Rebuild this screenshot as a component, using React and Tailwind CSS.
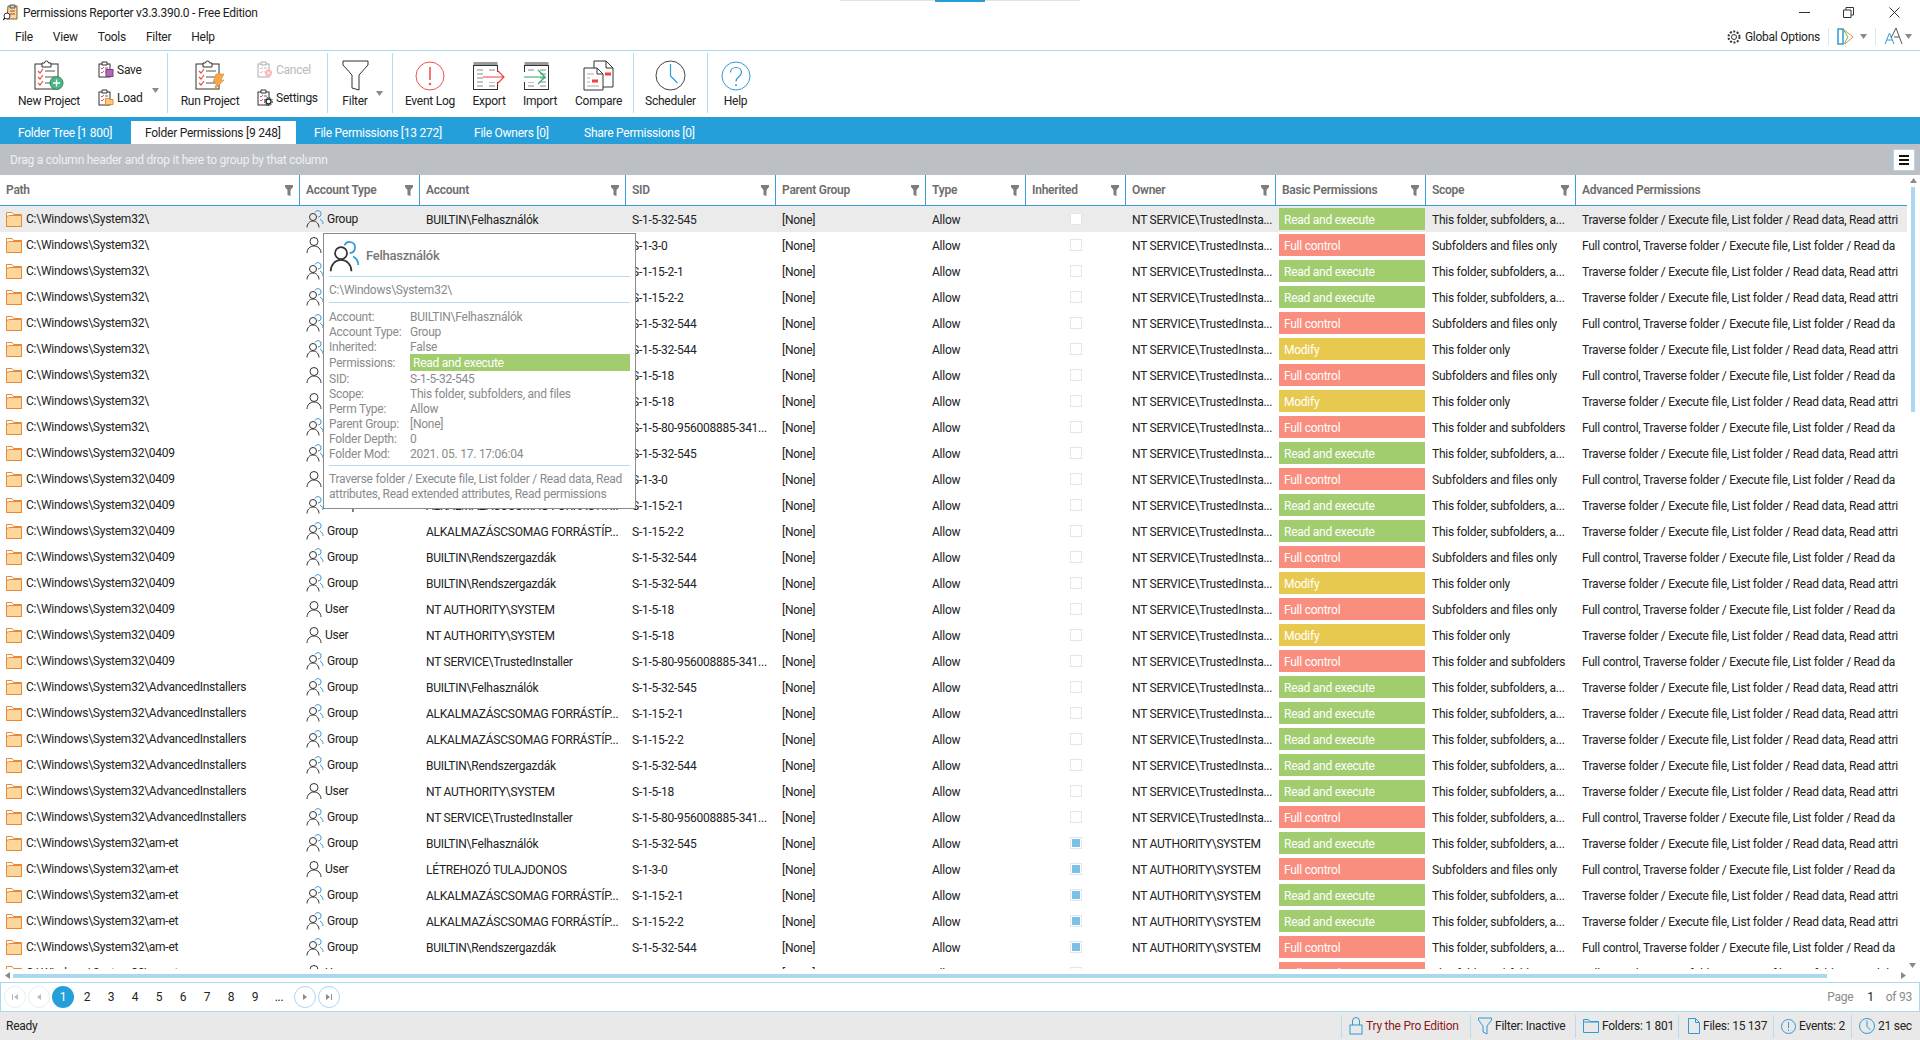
import React from 'react';

const RX = 'Read and execute';
const FC = 'Full control';
const MO = 'Modify';
const S_ALL = 'This folder, subfolders, a...';
const S_SUB = 'Subfolders and files only';
const S_ONLY = 'This folder only';
const S_FS = 'This folder and subfolders';
const A_T = 'Traverse folder / Execute file, List folder / Read data, Read attri';
const A_F = 'Full control, Traverse folder / Execute file, List folder / Read da';
const OW_T = 'NT SERVICE\\TrustedInsta...';
const OW_S = 'NT AUTHORITY\\SYSTEM';

const ACC = {
  felh: ['Group', 'BUILTIN\\Felhasználók', 'S-1-5-32-545'],
  creator: ['User', 'LÉTREHOZÓ TULAJDONOS', 'S-1-3-0'],
  alk1: ['Group', 'ALKALMAZÁSCSOMAG FORRÁSTÍP...', 'S-1-15-2-1'],
  alk2: ['Group', 'ALKALMAZÁSCSOMAG FORRÁSTÍP...', 'S-1-15-2-2'],
  rend: ['Group', 'BUILTIN\\Rendszergazdák', 'S-1-5-32-544'],
  sys: ['User', 'NT AUTHORITY\\SYSTEM', 'S-1-5-18'],
  ti: ['Group', 'NT SERVICE\\TrustedInstaller', 'S-1-5-80-956008885-341...'],
};

const P1 = 'C:\\Windows\\System32\\';
const P2 = 'C:\\Windows\\System32\\0409';
const P3 = 'C:\\Windows\\System32\\AdvancedInstallers';
const P4 = 'C:\\Windows\\System32\\am-et';

const rows = [
  [P1, 'felh', RX, S_ALL],
  [P1, 'creator', FC, S_SUB],
  [P1, 'alk1', RX, S_ALL],
  [P1, 'alk2', RX, S_ALL],
  [P1, 'rend', FC, S_SUB],
  [P1, 'rend', MO, S_ONLY],
  [P1, 'sys', FC, S_SUB],
  [P1, 'sys', MO, S_ONLY],
  [P1, 'ti', FC, S_FS],
  [P2, 'felh', RX, S_ALL],
  [P2, 'creator', FC, S_SUB],
  [P2, 'alk1', RX, S_ALL],
  [P2, 'alk2', RX, S_ALL],
  [P2, 'rend', FC, S_SUB],
  [P2, 'rend', MO, S_ONLY],
  [P2, 'sys', FC, S_SUB],
  [P2, 'sys', MO, S_ONLY],
  [P2, 'ti', FC, S_FS],
  [P3, 'felh', RX, S_ALL],
  [P3, 'alk1', RX, S_ALL],
  [P3, 'alk2', RX, S_ALL],
  [P3, 'rend', RX, S_ALL],
  [P3, 'sys', RX, S_ALL],
  [P3, 'ti', FC, S_ALL],
  [P4, 'felh', RX, S_ALL, true],
  [P4, 'creator', FC, S_SUB, true],
  [P4, 'alk1', RX, S_ALL, true],
  [P4, 'alk2', RX, S_ALL, true],
  [P4, 'rend', FC, S_ALL, true],
  [P4, 'sys', FC, S_ALL, true],
];

const columns = ['Path', 'Account Type', 'Account', 'SID', 'Parent Group', 'Type', 'Inherited', 'Owner', 'Basic Permissions', 'Scope', 'Advanced Permissions'];

const permClass = {
  [RX]: 'bg-[#a1cd6f]',
  [FC]: 'bg-[#f98e7e]',
  [MO]: 'bg-[#e8c94f]',
};

const tips = [
  ['Account:', 'BUILTIN\\Felhasználók'],
  ['Account Type:', 'Group'],
  ['Inherited:', 'False'],
  ['Permissions:', RX],
  ['SID:', 'S-1-5-32-545'],
  ['Scope:', 'This folder, subfolders, and files'],
  ['Perm Type:', 'Allow'],
  ['Parent Group:', '[None]'],
  ['Folder Depth:', '0'],
  ['Folder Mod:', '2021. 05. 17. 17:06:04'],
];

const Caret = ({ className = '' }) => (
  <svg width="7" height="5" viewBox="0 0 7 5" className={className}><path d="M0 0h7L3.5 5z" fill="#8a8a8a" /></svg>
);

const ClipLarge = ({ children }) => (
  <svg width="30" height="31" viewBox="0 0 30 31" fill="none">
    <rect x="1" y="4" width="23" height="25" fill="#fff" stroke="#333" />
    <path d="M8 7V3h2.5a2 2 0 0 1 4 0H17v4z" fill="#fff" stroke="#333" />
    {[11, 17, 23].map((y) => (
      <g key={y}>
        <path d={`M4 ${y}l2 2 3-4`} stroke="#ee4b4b" strokeWidth="1.2" />
        <path d={`M11 ${y}h10`} stroke="#555" />
      </g>
    ))}
    {children}
  </svg>
);

const ClipSmall = ({ children, muted }) => (
  <svg width="16" height="17" viewBox="0 0 16 17" fill="none" className={muted ? 'opacity-40' : ''}>
    <rect x="1" y="3" width="11" height="13" fill="#fff" stroke="#333" />
    <path d="M4 4V1h5v3z" fill="#fff" stroke="#333" />
    <path d="M3 7l1 1 2-2M3 11l1 1 2-2" stroke="#ee4b4b" />
    <path d="M7 7h3M7 11h3" stroke="#666" />
    {children}
  </svg>
);

const Sheet = ({ children }) => (
  <svg width="34" height="30" viewBox="0 0 34 30" fill="none">
    <rect x="1.5" y="1" width="24" height="4" fill="#9a9a9a" />
    <rect x="1.5" y="4.5" width="24" height="24" fill="#fff" stroke="#333" />
    {[9, 13, 17, 21, 25].map((y) => <path key={y} d={`M5 ${y}h6M17 ${y}h6`} stroke="#888" />)}
    {children}
  </svg>
);

const FolderIcon = () => (
  <svg width="16" height="15" viewBox="0 0 16 15" fill="none" className="shrink-0">
    <path d="M.5 14.500V.5h5.500l1.500 2h8v12z" fill="#fff" stroke="#e8873a" />
    <path d="M.5 14.500V4.500l3-1h12v11z" fill="#fcd79c" stroke="#e8873a" />
  </svg>
);

const UserIcon = ({ size = 16 }) => (
  <svg width={size} height={size + 2} viewBox="0 0 16 18" fill="none" className="shrink-0">
    <circle cx="8" cy="5.500" r="4" stroke="#333" />
    <path d="M1 17c0-4 3-7 7-7s7 3 7 7" stroke="#333" />
  </svg>
);

const GroupIcon = ({ size = 18 }) => (
  <svg width={size} height={size} viewBox="0 0 18 18" fill="none" className="shrink-0">
    <path d="M9 2.500a3.200 3.200 0 1 1 3 4.500M14 9c1.800 1 3 3 3 5" stroke="#2f9bd6" />
    <circle cx="7" cy="7" r="3.500" stroke="#333" />
    <path d="M1 17.500c0-3.500 2.500-6.500 6-6.500s6 3 6 6.500" stroke="#333" />
  </svg>
);

const HeaderFilter = () => (
  <svg width="8" height="11" viewBox="0 0 8 11" className="shrink-0"><path d="M0 0h8v2L5.500 5v6l-3-1V5L0 2z" fill="#7d7d7d" /></svg>
);

const LargeButton = ({ width, extra = '', label, children }) => (
  <div className={`flex flex-col items-center pt-[9px] ${width} ${extra}`}>
    <div className="h-[31px] flex items-center justify-center">{children}</div>
    <div className="mt-[2px] leading-[16px] whitespace-nowrap">{label}</div>
  </div>
);

const SmallButton = ({ icon, label, muted }) => (
  <div className={`flex items-center gap-[3px] h-[17px] ${muted ? 'text-[#b9b9b9]' : ''}`}>
    {icon}
    <span className="whitespace-nowrap">{label}</span>
  </div>
);

const Sep = () => <div className="w-px h-[60px] bg-[#b5dcf0] mt-[2px] shrink-0" />;

const Toolbar = () => (
  <div className="h-[66px] flex shrink-0 items-start text-[#222]">
    <LargeButton width="w-[98px]" label="New Project">
      <ClipLarge>
        <circle cx="22.500" cy="23" r="6.500" fill="#4fb584" stroke="#2f8a5e" />
        <path d="M22.500 19.500v7M19 23h7" stroke="#fff" strokeWidth="1.300" />
      </ClipLarge>
    </LargeButton>
    <div className="w-[69px] flex flex-col gap-[11px] pt-[10px] relative">
      <SmallButton label="Save" icon={
        <ClipSmall><rect x="8" y="8.500" width="7" height="7" fill="#b067b8" stroke="#7d3e8a" /></ClipSmall>
      } />
      <SmallButton label="Load" icon={
        <ClipSmall><path d="M7.500 15.500v-6h3l1 1h3.500v5z" fill="#fbc97a" stroke="#e8873a" /></ClipSmall>
      } />
      <Caret className="absolute left-[54px] top-[37px]" />
    </div>
    <Sep />
    <LargeButton width="w-[84px]" label="Run Project">
      <ClipLarge>
        <path d="M21 14h8l-3 6h3l-10 10 3-8h-4z" fill="#f5a84a" stroke="#e8873a" strokeWidth=".6" />
      </ClipLarge>
    </LargeButton>
    <div className="w-[75px] pl-[5px] flex flex-col gap-[11px] pt-[10px]">
      <SmallButton muted label="Cancel" icon={
        <ClipSmall muted><circle cx="11.500" cy="12" r="3.500" fill="#ee4b4b" /><path d="M10 10.500l3 3M13 10.500l-3 3" stroke="#fff" /></ClipSmall>
      } />
      <SmallButton label="Settings" icon={
        <ClipSmall><circle cx="11.500" cy="12.500" r="2.500" fill="#fff" stroke="#333" strokeWidth="1.500" /><circle cx="11.500" cy="12.500" r="4" stroke="#333" strokeDasharray="1.500 1.200" /></ClipSmall>
      } />
    </div>
    <Sep />
    <div className="w-[64px] relative">
      <LargeButton width="w-[54px]" label="Filter">
        <svg width="27" height="31" viewBox="0 0 27 31" fill="none">
          <path d="M1 1h25v4l-9 10v15l-7-2V15L1 5z" fill="#fff" stroke="#333" />
        </svg>
      </LargeButton>
      <Caret className="absolute left-[48px] top-[40px]" />
    </div>
    <Sep />
    <LargeButton width="w-[74px]" label="Event Log">
      <svg width="30" height="30" viewBox="0 0 30 30" fill="none">
        <circle cx="15" cy="15" r="14" stroke="#ef5350" />
        <path d="M15 6v13" stroke="#ef5350" strokeWidth="1.600" />
        <circle cx="15" cy="23" r="1.200" fill="#ef5350" />
      </svg>
    </LargeButton>
    <LargeButton width="w-[44px]" label="Export">
      <Sheet>
        <rect x="11" y="11" width="15" height="10" fill="#fff" />
        <path d="M11 16h21M25 9l7 7-7 7" stroke="#ef4040" strokeWidth="1.200" fill="none" />
      </Sheet>
    </LargeButton>
    <LargeButton width="w-[58px]" label="Import">
      <Sheet>
        <rect x="1" y="11" width="15" height="10" fill="#fff" />
        <path d="M1 16h21M15 9l7 7-7 7" stroke="#27ae60" strokeWidth="1.200" fill="none" />
      </Sheet>
    </LargeButton>
    <LargeButton width="w-[59px]" extra="mr-[5px]" label="Compare">
      <svg width="31" height="31" viewBox="0 0 31 31" fill="none">
        <path d="M11 1h12l7 7v19H11z" fill="#fff" stroke="#333" />
        <path d="M23 1v7h7" stroke="#333" />
        <path d="M22 14h6" stroke="#ef4040" strokeWidth="3" />
        <path d="M1 8h13l6 6v16H1z" fill="#fff" stroke="#333" />
        <path d="M14 8v6h6" stroke="#333" />
        <path d="M4 14h7M4 18h3M4 22h3M4 26h12" stroke="#aaa" />
        <path d="M9 21h6" stroke="#ef4040" strokeWidth="3" />
      </svg>
    </LargeButton>
    <Sep />
    <LargeButton width="w-[73px]" label="Scheduler">
      <svg width="31" height="31" viewBox="0 0 31 31" fill="none">
        <circle cx="15.500" cy="15.500" r="14.500" stroke="#444" />
        <path d="M15.500 4v12l7 7" stroke="#2f9bd6" strokeWidth="1.200" />
      </svg>
    </LargeButton>
    <Sep />
    <LargeButton width="w-[55px]" label="Help">
      <svg width="30" height="30" viewBox="0 0 30 30" fill="none">
        <circle cx="15" cy="15" r="14" stroke="#2f9bd6" />
        <path d="M9.500 11.500c0-3 2.500-5 5.500-5s5.500 2 5.500 5c0 4-5.500 4-5.500 9" stroke="#2f9bd6" strokeWidth="1.200" />
        <circle cx="15" cy="24" r="1" fill="#2f9bd6" />
      </svg>
    </LargeButton>
  </div>
);

const Row = ({ row, index }) => {
  const [path, key, perm, scope, inherited] = row;
  const [type, account, sid] = ACC[key];
  return (
    <div className={`grid grid-cols-[300px_120px_206px_150px_150px_100px_100px_150px_150px_150px_324px] h-[26px] items-center text-[#222] ${index === 0 ? 'bg-[#ebebeb]' : ''}`}>
      <div className="flex items-center gap-[4px] pl-[6px] whitespace-nowrap">
        <FolderIcon />
        <span>{path}</span>
      </div>
      <div className="flex items-center gap-[3px] pl-[6px]">
        {type === 'User' ? <UserIcon /> : <GroupIcon />}
        <span>{type}</span>
      </div>
      <div className="pl-[6px] pt-[2px] whitespace-nowrap">{account}</div>
      <div className="pl-[6px] pt-[2px] whitespace-nowrap">{sid}</div>
      <div className="pl-[6px] pt-[2px]">[None]</div>
      <div className="pl-[6px] pt-[2px]">Allow</div>
      <div className="flex justify-center">
        <div className="w-[12px] h-[12px] border border-[#e3e6e8] bg-white flex items-center justify-center">
          {inherited && <div className="w-[8px] h-[8px] bg-[#7cc0e6]" />}
        </div>
      </div>
      <div className="pl-[6px] pt-[2px] whitespace-nowrap">{inherited ? OW_S : OW_T}</div>
      <div className={`h-[22px] ml-[3px] mr-px pl-[5px] pt-[1px] flex items-center text-white ${permClass[perm]}`}>{perm}</div>
      <div className="pl-[6px] pt-[2px] whitespace-nowrap">{scope}</div>
      <div className="pl-[6px] pt-[2px] whitespace-nowrap overflow-hidden">{perm === FC ? A_F : A_T}</div>
    </div>
  );
};

const Tooltip = () => (
  <div className="absolute left-[323px] top-[27px] w-[313px] h-[276px] bg-white border border-[#8d8d8d] text-[#8a8a8a] px-[5px]">
    <div className="h-[43px] flex items-center gap-[6px] border-b border-[#b5dcf0] pt-[2px]">
      <GroupIcon size={31} />
      <span className="text-[13px] text-[#777] font-medium">Felhasználók</span>
    </div>
    <div className="h-[26px] flex items-center border-b border-[#b5dcf0]">{P1}</div>
    <div className="pt-[6px] h-[163px] border-b border-[#b5dcf0]">
      {tips.map(([k, v]) => (
        k === 'Permissions:' ? (
          <div key={k} className="flex h-[17px] items-center">
            <span className="w-[81px]">{k}</span>
            <span className="flex-1 h-[17px] flex items-center pl-[3px] bg-[#a1cd6f] text-white">{v}</span>
          </div>
        ) : (
          <div key={k} className="flex h-[15px] items-center">
            <span className="w-[81px]">{k}</span>
            <span>{v}</span>
          </div>
        )
      ))}
    </div>
    <div className="pt-[6px] leading-[15px]">Traverse folder / Execute file, List folder / Read data, Read attributes, Read extended attributes, Read permissions</div>
  </div>
);

const Circle = ({ children, strong, className = '' }) => (
  <div className={`w-[22px] h-[22px] rounded-full border flex items-center justify-center bg-white ${strong ? 'border-[#a9d8ef]' : 'border-[#e4eef4]'} ${className}`}>
    {children}
  </div>
);

const Nav = ({ d, fill }) => (
  <svg width="8" height="8" viewBox="0 0 8 8"><path d={d} fill={fill} /></svg>
);

const StatusItem = ({ icon, children, className = '', width }) => (
  <div className={`flex items-center gap-[3px] border-l border-[#b5dcf0] h-[23px] pl-[7px] ${width} ${className}`}>
    {icon}
    <span className="whitespace-nowrap">{children}</span>
  </div>
);

export default function App() {
  return (
    <div className="relative w-screen h-screen overflow-hidden bg-white flex flex-col text-[12px] leading-[16px] text-[#222] font-['Roboto',sans-serif] tracking-[-0.25px]">
      {/* Title bar */}
      <div className="h-[25px] flex items-center shrink-0 relative">
        <svg width="16" height="17" viewBox="0 0 16 17" fill="none" className="ml-[3px] mr-[4px]">
          <path d="M5 2h9v13H4z" fill="#f4d9a0" stroke="#8a5a2a" />
          <path d="M7 1h5v3H7z" fill="#ccc" stroke="#555" />
          <path d="M7 7h5M7 10h5" stroke="#c0392b" />
          <circle cx="4" cy="12" r="3" fill="#fff" stroke="#333" />
          <path d="M2 14l-2 2" stroke="#333" strokeWidth="1.500" />
        </svg>
        <span>Permissions Reporter v3.3.390.0 - Free Edition</span>
        <div className="absolute top-0 left-[840px] w-[240px] h-px bg-[#e2e2e2]" />
        <div className="absolute top-0 left-[935px] w-[50px] h-[2px] bg-[#259fda]" />
        <div className="ml-auto flex items-center">
          <svg width="11" height="11" viewBox="0 0 11 11" className="mr-[33px]"><path d="M0 5.500h11" stroke="#333" /></svg>
          <svg width="11" height="11" viewBox="0 0 11 11" fill="none" className="mr-[35px]"><path d="M.5 3h7.500v7.500H.5zM3 3V.5h7.500V8H8" stroke="#333" /></svg>
          <svg width="11" height="11" viewBox="0 0 11 11" className="mr-[20px]"><path d="M.5.500l10 10M10.500.500l-10 10" stroke="#333" /></svg>
        </div>
      </div>

      {/* Menu */}
      <div className="h-[26px] flex items-center border-b border-[#a9d8ef] shrink-0 pb-[2px]">
        <div className="flex gap-[20px] pl-[15px]">
          <span>File</span><span>View</span><span>Tools</span><span>Filter</span><span>Help</span>
        </div>
        <div className="ml-auto flex items-center pr-[8px]">
          <svg width="16" height="16" viewBox="0 0 16 16" fill="none" className="mr-[3px]">
            <circle cx="8" cy="8" r="2.500" stroke="#333" />
            <circle cx="8" cy="8" r="5.500" stroke="#333" strokeWidth="2" strokeDasharray="2 1.500" />
          </svg>
          <span>Global Options</span>
          <div className="w-px h-[17px] bg-[#d5e7f0] mx-[8px]" />
          <svg width="19" height="19" viewBox="0 0 19 19" fill="none">
            <path d="M1 2h5v15H1z" stroke="#2f9bd6" strokeWidth="1.500" />
            <path d="M6 2l10 8-8 7" stroke="#e8873a" />
            <path d="M6 2l5 8-4 7" stroke="#5fb84f" />
          </svg>
          <Caret className="ml-[4px]" />
          <div className="w-px h-[17px] bg-[#d5e7f0] mx-[8px]" />
          <svg width="19" height="19" viewBox="0 0 19 19" fill="none">
            <path d="M1 17L5.500 6 10 17M3 13h5" stroke="#2f9bd6" />
            <path d="M7 11l5-10 6 16M10 10h5" stroke="#555" />
          </svg>
          <Caret className="ml-[2px]" />
        </div>
      </div>

      <Toolbar />

      {/* Tabs */}
      <div className="h-[27px] bg-[#259fda] flex items-end shrink-0 text-white">
        <div className="w-[131px] h-[23px] pl-[18px] flex items-center">Folder Tree [1 800]</div>
        <div className="w-[165px] h-[23px] pl-[14px] flex items-center bg-white text-[#222]">Folder Permissions [9 248]</div>
        <div className="w-[160px] h-[23px] pl-[18px] flex items-center">File Permissions [13 272]</div>
        <div className="w-[110px] h-[23px] pl-[18px] flex items-center">File Owners [0]</div>
        <div className="h-[23px] pl-[18px] flex items-center">Share Permissions [0]</div>
      </div>

      {/* Group panel */}
      <div className="h-[31px] bg-[#bcc0c4] flex items-center pl-[10px] pr-[5px] shrink-0 text-[#eef0f1]">
        <span>Drag a column header and drop it here to group by that column</span>
        <div className="ml-auto w-[22px] h-[22px] bg-white border border-[#a9d8ef] flex flex-col items-center justify-center gap-[2px]">
          <div className="w-[10px] h-[2px] bg-[#111]" />
          <div className="w-[10px] h-[2px] bg-[#111]" />
          <div className="w-[10px] h-[2px] bg-[#111]" />
        </div>
      </div>

      {/* Column headers */}
      <div className="h-[31px] shrink-0">
        <div className="grid grid-cols-[300px_120px_206px_150px_150px_100px_100px_150px_150px_150px_324px] h-[30px] w-[1907px] font-semibold text-[#6d6d6d]">
          {columns.map((c, i) => (
            <div key={c} className={`flex items-center justify-between px-[6px] ${i < columns.length - 1 ? 'border-r border-[#3a9fd6]' : ''}`}>
              <span className="whitespace-nowrap">{c}</span>
              {i < columns.length - 1 && <HeaderFilter />}
            </div>
          ))}
        </div>
        <div className="h-px w-[1907px] bg-[#3a9fd6]" />
      </div>

      {/* Rows */}
      <div className="flex-1 relative overflow-hidden min-h-0">
        <div className="w-[1907px] overflow-hidden">
          {rows.map((r, i) => <Row key={i} row={r} index={i} />)}
        </div>
        <Tooltip />
        <Caret className="absolute left-[1909px] bottom-[1px]" />
      </div>

      {/* Vertical scrollbar */}
      <Caret className="absolute left-[1910px] top-[178px] rotate-180" />
      <div className="absolute left-[1911px] top-[187px] w-[4px] h-[225px] bg-[#a9d8ef]" />

      {/* Horizontal scrollbar */}
      <div className="h-[13px] flex items-center shrink-0 pl-[5px] pr-[14px] gap-[3px]">
        <svg width="5" height="7" viewBox="0 0 5 7"><path d="M5 0v7L0 3.500z" fill="#8a8a8a" /></svg>
        <div className="w-[1814px] h-[4px] bg-[#a9d8ef]" />
        <svg width="5" height="7" viewBox="0 0 5 7" className="ml-auto"><path d="M0 0v7l5-3.500z" fill="#8a8a8a" /></svg>
      </div>

      {/* Pager */}
      <div className="h-[30px] border border-[#a9d8ef] flex items-center pl-[3px] gap-[2px] shrink-0">
        <Circle><Nav d="M1 1h1v6H1zM7 1v6L3 4z" fill="#bbb" /></Circle>
        <Circle><Nav d="M6 1v6L2 4z" fill="#bbb" /></Circle>
        <div className="w-[22px] h-[22px] rounded-full bg-[#259fda] text-white flex items-center justify-center">1</div>
        {['2', '3', '4', '5', '6', '7', '8', '9', '...'].map((n) => (
          <div key={n} className="w-[22px] h-[22px] flex items-center justify-center">{n}</div>
        ))}
        <Circle strong className="ml-[2px]"><Nav d="M2 1v6l4-3z" fill="#8a8a8a" /></Circle>
        <Circle strong><Nav d="M1 1v6l4-3zM6 1h1v6H6z" fill="#8a8a8a" /></Circle>
        <div className="ml-auto flex items-center pr-[7px] text-[#8a8a8a]">
          <span>Page</span>
          <span className="ml-[14px] mr-[12px] text-[#222]">1</span>
          <span>of 93</span>
        </div>
      </div>

      {/* Status bar */}
      <div className="h-[28px] bg-[#e9e9e9] flex items-center pl-[6px] shrink-0">
        <span>Ready</span>
        <div className="ml-auto flex items-center">
          <StatusItem width="w-[129px]" className="text-[#8b1a1a]" icon={
            <svg width="14" height="18" viewBox="0 0 14 18" fill="none"><rect x="1" y="8" width="12" height="9" stroke="#2f9bd6" /><path d="M3.500 8V4a3.500 3.500 0 0 1 7 0v4" stroke="#2f9bd6" /></svg>
          }>Try the Pro Edition</StatusItem>
          <StatusItem width="w-[105px]" icon={
            <svg width="14" height="18" viewBox="0 0 14 18" fill="none"><path d="M.5 1h13v2L9 9v8l-4-2V9L.5 3z" stroke="#2f9bd6" /></svg>
          }>Filter: Inactive</StatusItem>
          <StatusItem width="w-[103px]" icon={
            <svg width="16" height="14" viewBox="0 0 16 14" fill="none"><path d="M.5 13.500V.5h5l1.500 2h8.500v11zM.5 3h15" stroke="#2f9bd6" /></svg>
          }>Folders: 1 801</StatusItem>
          <StatusItem width="w-[95px]" className="pl-[9px]" icon={
            <svg width="12" height="16" viewBox="0 0 12 16" fill="none"><path d="M.5.500h7l4 4v11H.5zM7.500.500v4h4" stroke="#2f9bd6" /></svg>
          }>Files: 15 137</StatusItem>
          <StatusItem width="w-[78px]" className="pl-[6px]" icon={
            <svg width="15" height="15" viewBox="0 0 15 15" fill="none"><circle cx="7.500" cy="7.500" r="7" stroke="#2f9bd6" /><path d="M7.500 3v6M7.500 10.500v1.500" stroke="#2f9bd6" /></svg>
          }>Events: 2</StatusItem>
          <StatusItem width="w-[69px]" className="pl-[6px]" icon={
            <svg width="16" height="16" viewBox="0 0 16 16" fill="none"><circle cx="8" cy="8" r="7.500" stroke="#2f9bd6" /><path d="M8 2.500v6l3.500 3.500" stroke="#2f9bd6" /></svg>
          }>21 sec</StatusItem>
        </div>
      </div>
    </div>
  );
}
